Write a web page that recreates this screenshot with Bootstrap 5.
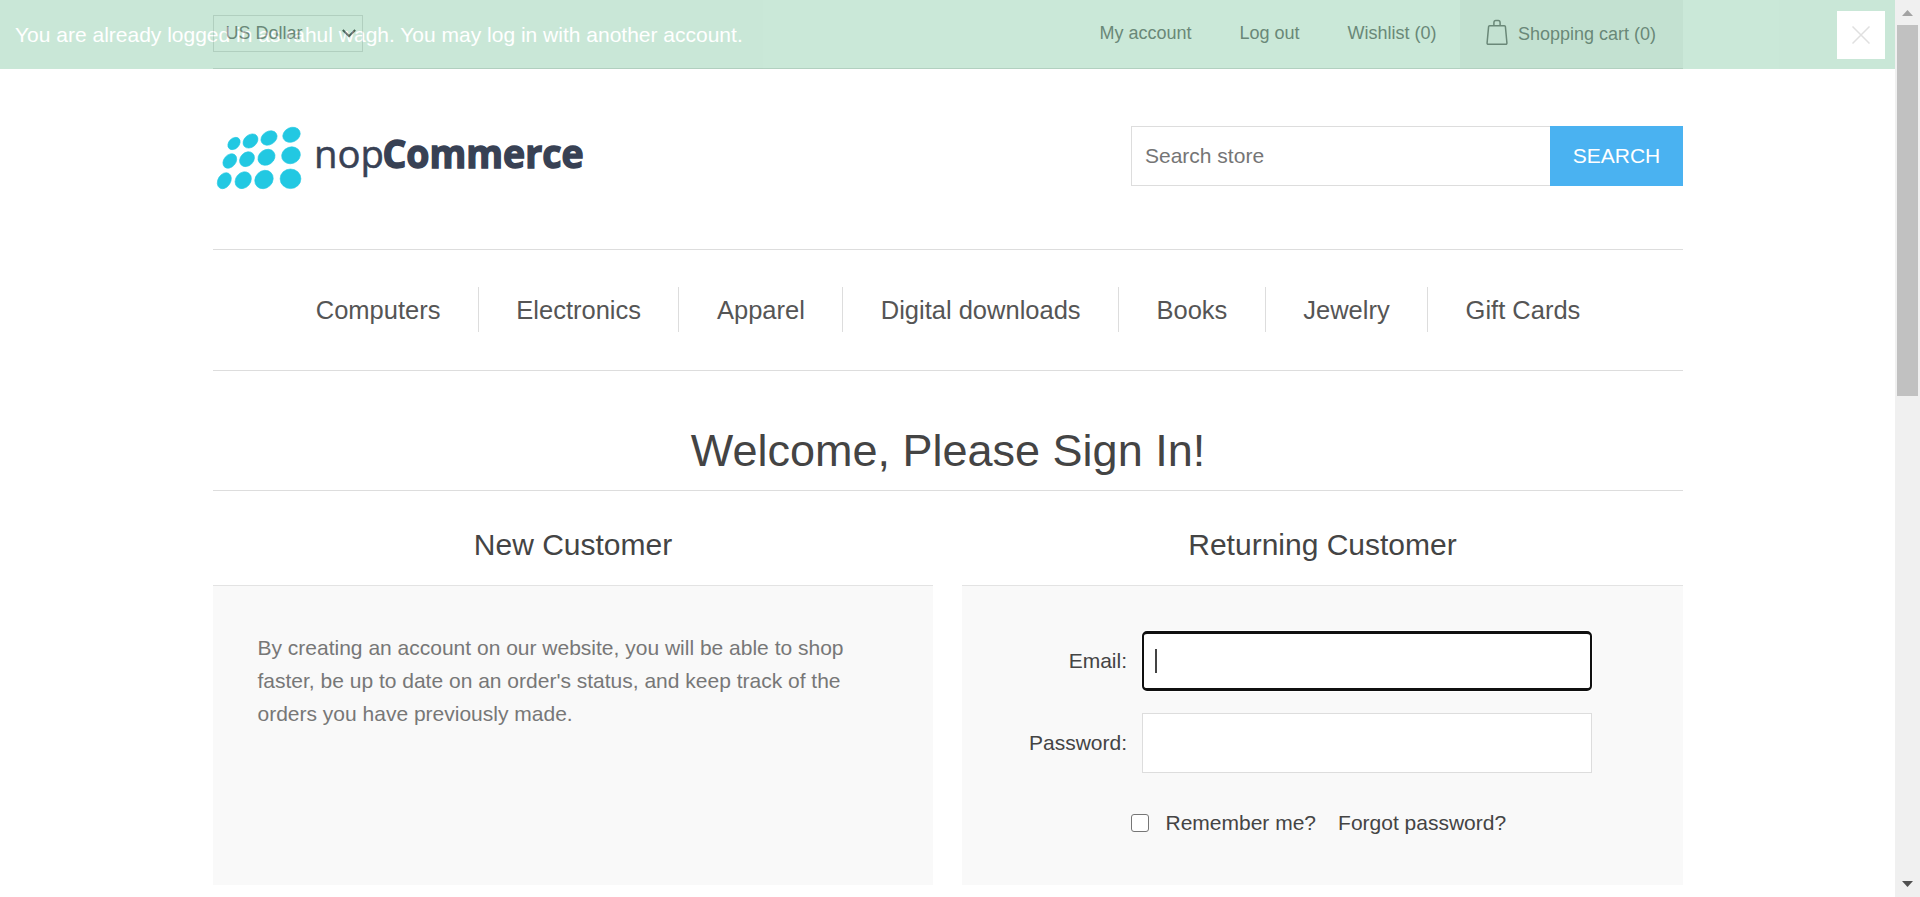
<!DOCTYPE html>
<html lang="en">
<head>
<meta charset="utf-8">
<title>nopCommerce demo store. Login</title>
<link href="https://cdn.jsdelivr.net/npm/bootstrap@5.3.0/dist/css/bootstrap.min.css" rel="stylesheet">
<style>
body{font-family:"Liberation Sans",Arial,sans-serif;font-size:21px;color:#777;height:897px;overflow:hidden;background:#fff}
a{color:inherit;text-decoration:none}
.page-area{width:1895px}
.store{width:1470px;margin-left:213px}
.rule{border-bottom:1px solid #ddd}
.top-row{height:69px;font-size:18px}
.currency{width:150px;height:37px;margin-top:15px;border:1px solid #ddd;padding:0 6px 0 11.5px;line-height:35px}
.top-links{line-height:67px}
.top-links a{padding:0 23.5px 0 24.5px}
.top-links .cart{background:#f6f6f6;width:223px;padding:0 0 0 26px}
.cart svg{margin-right:10px;margin-top:-4px}
.brand-row{height:181px}
.brand-row form{padding-top:57px}
.search-field{width:419px;height:60px;border:1px solid #ddd;border-right:0;border-radius:0;font-size:21px;padding:0 13px;color:#777}
.search-field::placeholder{color:#757575}
.search-btn{width:133px;height:60px;border-radius:0;background:#4ab2f1;color:#fff;font-size:21px;border:0;padding:0}
.menu-row{height:121px;font-size:25.5px;color:#555;padding-bottom:2px}
.menu-row a{height:45px;line-height:46px;padding:0 37.4px 0 37.5px;border-right:1px solid #ddd}
.menu-row a:last-child{border:0}
h1.headline{font-size:45px;line-height:60px;height:120px;padding-top:50px;margin:0;color:#444;font-weight:400}
h2.sub{font-size:30px;line-height:40px;height:94px;padding-top:34px;margin:0;color:#444;font-weight:400}
.panel{height:300px;background:#f9f9f9;border-top:1px solid #e3e3e3}
.left-col{width:720px}
.right-col{width:721px}
.intro{padding:45px 80px 0 44.5px;line-height:33px}
.form-area{padding-top:45px;color:#444}
.form-area label.tag-name{width:165px;margin-right:15px}
.box-input{width:450px;height:60px;background:#fff;border:1px solid #ddd}
.box-input.active{border:2px solid #101010;border-top-width:3px;border-bottom-width:3px;border-radius:5px;box-shadow:0 0 0 1px #fff;padding-left:11px}
.password-row{margin-top:22px}
.caret{width:2px;height:24px;background:#444}
.tick{width:18px;height:18px;border:1.5px solid #767676;border-radius:3px;background:#fff}
.remember{margin:40px 0 0 169px;line-height:20px}
.remember label{margin:0 22px 0 16.5px}
.notice{left:0;top:0;width:1895px;height:69px;background:#4bb07a;opacity:.295;padding:0 10px 0 15px;color:#fff}
.close-box{width:48px;height:48px;background:#fff}
.scroll-track{width:25px;height:897px;background:#f0f0f0}
.scroll-thumb{width:21px;height:371px;margin-top:9px;background:#c1c1c1}
</style>
</head>
<body>
<div class="d-flex position-relative">
 <div class="page-area">
  <div class="store">
   <div class="top-row rule d-flex justify-content-between">
    <div class="currency d-flex justify-content-between align-items-center"><span>US Dollar</span>
     <svg width="14" height="9" viewBox="0 0 14 9" fill="none" stroke="#444" stroke-width="2"><path d="M.8 1l6.2 6.200L13.200 1"/></svg></div>
    <nav class="top-links d-flex">
     <a href="#">My account</a><a href="#">Log out</a><a href="#">Wishlist (0)</a>
     <a href="#" class="cart d-flex align-items-center"><svg width="22" height="27" viewBox="0 0 22 27" fill="none" stroke="#777" stroke-width="1.500" stroke-linejoin="round"><path d="M3.600 6.700h14.800q.9 0 1 .9l1.500 16.200q.1 1.500-1.300 1.500H2.400q-1.400 0-1.300-1.500l1.500-16.200q.1-.9 1-.9zM7.900 6.700V3.800q0-2.200 2-2.200h2.200q2 0 2 2.200V6.700"/></svg>Shopping cart (0)</a>
    </nav>
   </div>
   <header class="brand-row rule d-flex justify-content-between">
    <svg width="380" height="130" viewBox="213 69 380 130" role="img" aria-label="nopCommerce">
     <g fill="#22c8e2" stroke="#22c8e2" stroke-width=".6">
      <ellipse cx="234" cy="143.500" rx="7" ry="5.200" transform="rotate(-45 234 143.500)"/>
      <ellipse cx="250.500" cy="141" rx="8.200" ry="6.200" transform="rotate(-40 250.500 141)"/>
      <ellipse cx="269" cy="138" rx="8.600" ry="6.600" transform="rotate(-32 269 138)"/>
      <ellipse cx="291.500" cy="134.800" rx="9" ry="7.200" transform="rotate(-25 291.500 134.800)"/>
      <ellipse cx="229.800" cy="161" rx="8" ry="6" transform="rotate(-50 229.800 161)"/>
      <ellipse cx="247" cy="159.200" rx="8.200" ry="6.600" transform="rotate(-45 247 159.200)"/>
      <ellipse cx="266.500" cy="157.300" rx="9" ry="7.500" transform="rotate(-35 266.500 157.300)"/>
      <ellipse cx="291" cy="155.300" rx="9.500" ry="8.300" transform="rotate(-20 291 155.300)"/>
      <ellipse cx="224.300" cy="180.700" rx="8.600" ry="6.300" transform="rotate(-58 224.300 180.700)"/>
      <ellipse cx="243.200" cy="180.200" rx="9" ry="7.500" transform="rotate(-50 243.200 180.200)"/>
      <ellipse cx="264" cy="179.500" rx="9.800" ry="8.600" transform="rotate(-45 264 179.500)"/>
      <ellipse cx="290.500" cy="178.800" rx="10.400" ry="9.800"/>
     </g>
     <g font-family="Open Sans, Noto Sans, sans-serif" font-size="38.500" fill="#384154" stroke="#384154">
      <text x="314" y="168" stroke-width=".5" textLength="70" lengthAdjust="spacingAndGlyphs">nop</text>
      <text x="382.500" y="167.500" font-weight="700" stroke-width="1.400" textLength="201" lengthAdjust="spacingAndGlyphs">Commerce</text>
     </g>
    </svg>
    <form class="d-flex">
     <input class="search-field form-control" placeholder="Search store"><button type="button" class="search-btn btn">SEARCH</button>
    </form>
   </header>
   <nav class="menu-row rule d-flex justify-content-center align-items-center">
    <a href="#">Computers</a><a href="#">Electronics</a><a href="#">Apparel</a><a href="#">Digital downloads</a><a href="#">Books</a><a href="#">Jewelry</a><a href="#">Gift Cards</a>
   </nav>
   <h1 class="headline rule text-center">Welcome, Please Sign In!</h1>
   <div class="d-flex justify-content-between">
    <section class="left-col">
     <h2 class="sub text-center">New Customer</h2>
     <div class="panel"><p class="intro mb-0">By creating an account on our website, you will be able to shop faster, be up to date on an order's status, and keep track of the orders you have previously made.</p></div>
    </section>
    <section class="right-col">
     <h2 class="sub text-center">Returning Customer</h2>
     <div class="panel form-area">
      <div class="d-flex align-items-center"><label class="tag-name text-end">Email:</label><div class="box-input active d-flex align-items-center"><span class="caret"></span></div></div>
      <div class="password-row d-flex align-items-center"><label class="tag-name text-end">Password:</label><div class="box-input"></div></div>
      <div class="remember d-flex align-items-center"><span class="tick"></span><label>Remember me?</label><a href="#">Forgot password?</a></div>
     </div>
    </section>
   </div>
  </div>
 </div>
 <div class="scroll-track d-flex flex-column align-items-center">
  <svg width="25" height="16" viewBox="0 0 25 16"><path d="M7 16l5.500-6 5.500 6z" fill="#a3a3a3"/></svg>
  <div class="scroll-thumb"></div>
  <svg class="mt-auto mb-2" width="25" height="8" viewBox="0 0 25 8"><path d="M7 0h11l-5.500 6z" fill="#505050"/></svg>
 </div>
 <div class="notice position-absolute d-flex align-items-center justify-content-between">
  <span>You are already logged in as rahul wagh. You may log in with another account.</span>
  <div class="close-box d-flex align-items-center justify-content-center"><svg width="18" height="18" viewBox="0 0 18 18" stroke="#999" stroke-width="1.500"><path d="M.5.5l17 17M17.500.5l-17 17"/></svg></div>
 </div>
</div>
<script src="https://cdn.jsdelivr.net/npm/bootstrap@5.3.0/dist/js/bootstrap.bundle.min.js"></script>
</body>
</html>
